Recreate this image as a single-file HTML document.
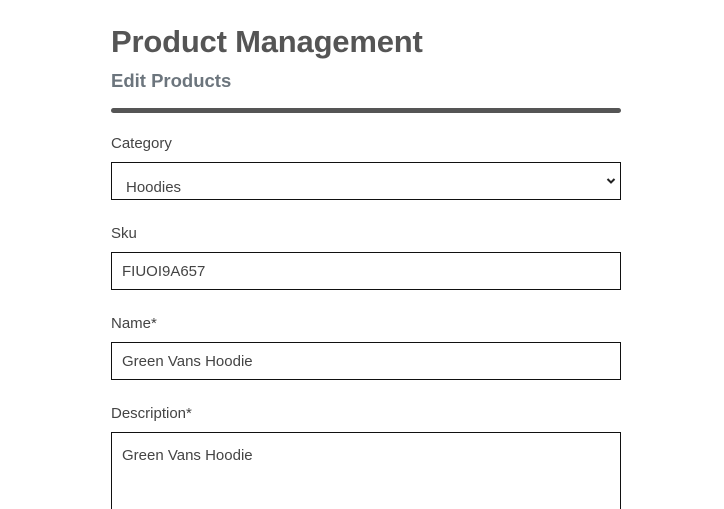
<!DOCTYPE html>
<html><head><style>
html,body{margin:0;background:#fff;font-family:"Liberation Sans",sans-serif;color:#333;}
.page{position:relative;width:724px;height:509px;overflow:hidden}
.wrap{position:absolute;left:111px;width:510px;top:0}
h1{position:absolute;top:24px;left:0;margin:0;font-size:31px;font-weight:bold;color:#555;letter-spacing:-0.2px;white-space:nowrap}
h2{position:absolute;top:70px;left:0;margin:0;font-size:18.5px;font-weight:bold;color:#6c757d;white-space:nowrap}
.bar{position:absolute;top:108px;left:0;width:510px;height:5px;border-radius:3px;background:#555}
.lab{position:absolute;left:0;font-size:15px;color:#444}
.box{position:absolute;left:0;width:508px;border:1px solid #111;background:#fff;font-size:15px;color:#444;overflow:hidden}
.box span{position:absolute;left:10px}
</style></head><body><div class="page"><div class="wrap">
<h1>Product Management</h1>
<h2>Edit Products</h2>
<div class="bar"></div>
<div class="lab" style="top:135px">Category</div>
<div class="box" style="top:162px;height:36px"><div style="position:absolute;left:0;top:0;right:0;height:31px;overflow:hidden"><span style="left:14px;top:16px">Hoodies</span></div>
<svg style="position:absolute;right:4px;top:14px" width="10" height="8" viewBox="0 0 10 8"><path d="M1.5 2L5 5.5 8.5 2" fill="none" stroke="#222" stroke-width="2"/></svg></div>
<div class="lab" style="top:225px">Sku</div>
<div class="box" style="top:252px;height:36px"><span style="top:10px">FIUOI9A657</span></div>
<div class="lab" style="top:315px">Name*</div>
<div class="box" style="top:342px;height:36px"><span style="top:10px">Green Vans Hoodie</span></div>
<div class="lab" style="top:405px">Description*</div>
<div class="box" style="top:432px;height:90px"><span style="top:14px">Green Vans Hoodie</span></div>
</div></div></body></html>
